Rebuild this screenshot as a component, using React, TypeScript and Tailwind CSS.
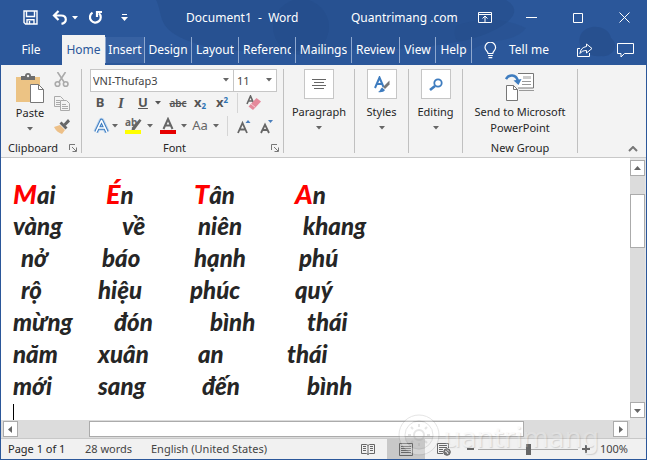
import React, { useState } from 'react';
import clsx from 'clsx';

const tabs = [
  { name: 'Home', width: 'w-[43px]' },
  { name: 'Insert', width: 'w-[40px]' },
  { name: 'Design', width: 'w-[47px]' },
  { name: 'Layout', width: 'w-[47px]' },
  { name: 'References', width: 'w-[57px]' },
  { name: 'Mailings', width: 'w-[56px]' },
  { name: 'Review', width: 'w-[48px]' },
  { name: 'View', width: 'w-[36px]' },
  { name: 'Help', width: 'w-[36px]' },
];

// each word: [text, indent]
const poem: [string, string][][] = [
  [['Mai', 'pl-0'], ['Én', 'pl-2'], ['Tân', 'pl-1'], ['An', 'pl-2']],
  [['vàng', 'pl-0'], ['về', 'pl-6'], ['niên', 'pl-2'], ['khang', 'pl-4']],
  [['nở', 'pl-2'], ['báo', 'pl-1'], ['hạnh', 'pl-1'], ['phú', 'pl-3']],
  [['rộ', 'pl-2'], ['hiệu', 'pl-0'], ['phúc', 'pl-0'], ['quý', 'pl-2']],
  [['mừng', 'pl-0'], ['đón', 'pl-4'], ['bình', 'pl-5'], ['thái', 'pl-5']],
  [['năm', 'pl-0'], ['xuân', 'pl-0'], ['an', 'pl-2'], ['thái', 'pl-0']],
  [['mới', 'pl-0'], ['sang', 'pl-0'], ['đến', 'pl-3'], ['bình', 'pl-5']],
];

const Caret: React.FC<{ className?: string }> = ({ className }) => (
  <svg width="6" height="4" viewBox="0 0 6 4" className={clsx('shrink-0', className)} aria-hidden="true">
    <path d="M0 0h6L3 3.5z" fill="currentColor" />
  </svg>
);

const Launcher: React.FC<{ label: string }> = ({ label }) => (
  <button aria-label={label} className="text-[#777]">
    <svg width="8" height="8" viewBox="0 0 8 8" fill="none" stroke="currentColor">
      <path d="M.5 6V.5H6M3 3l4 4M7.5 3.5v4h-4" />
    </svg>
  </button>
);

const TitleBar: React.FC = () => (
  <header className="flex h-[35px] items-center pl-[22px] pr-4">
    <div className="flex items-center">
      <button aria-label="Save">
        <svg width="15" height="15" viewBox="0 0 15 15" fill="none" stroke="white" strokeWidth="1.4">
          <path d="M1 1h13v13H2.5L1 12.5zM3.5 1v5.5h8V1M4 14V9.8h7V14M6.5 11v3" />
        </svg>
      </button>
      <button aria-label="Undo" className="ml-[14px]">
        <svg width="16" height="16" viewBox="0 0 16 16" fill="none" stroke="white" strokeWidth="2.2">
          <path d="M6.5 1L2 5.5l4.5 4.5M2.5 5.5H9c3 0 4.8 1.6 4.8 4 0 2-1.4 3.7-4.3 4.3" />
        </svg>
      </button>
      <Caret className="ml-1 text-white" />
      <button aria-label="Redo" className="ml-[10px]">
        <svg width="15" height="15" viewBox="0 0 15 15" fill="none" stroke="white" strokeWidth="2.2">
          <path d="M4.5 2.6A5.4 5.4 0 1 0 11 3.2M9 7V2h5" />
        </svg>
      </button>
      <button aria-label="Customize Quick Access Toolbar" className="ml-[18px]">
        <svg width="7" height="8" viewBox="0 0 7 8" fill="white">
          <path d="M1 0h5v1H1zM0 3h7L3.5 7z" />
        </svg>
      </button>
    </div>
    <h1 className="ml-[58px] w-[165px] whitespace-pre">Document1  -  Word</h1>
    <span className="flex-1 whitespace-nowrap">Quantrimang .com</span>
    <button aria-label="Ribbon Display Options">
      <svg width="14" height="12" viewBox="0 0 14 12" fill="none" stroke="white">
        <path d="M.5.5h13v10H.5zM.5 2.5h13M7 10V4.5M4.5 6.5L7 4l2.5 2.5" />
      </svg>
    </button>
    <button aria-label="Minimize" className="ml-[34px]">
      <svg width="11" height="11" viewBox="0 0 11 11" stroke="white"><path d="M0 5.5h11" /></svg>
    </button>
    <button aria-label="Maximize" className="ml-9">
      <svg width="10" height="10" viewBox="0 0 10 10" fill="none" stroke="white"><path d="M.5.5h9v9h-9z" /></svg>
    </button>
    <button aria-label="Close" className="ml-9">
      <svg width="11" height="11" viewBox="0 0 11 11" stroke="white"><path d="M.5.5l10 10M10.5.5l-10 10" /></svg>
    </button>
  </header>
);

const TabBar: React.FC = () => (
  <nav className="flex h-[30px]">
    <button className="w-[61px] pb-px pr-px">File</button>
    {tabs.map((tab) => (
      <button
        key={tab.name}
        className={clsx(
          'flex shrink-0 items-center pb-px',
          tab.width,
          tab.name === 'Home' ? 'bg-[#f3f3f3] text-[#2b579a]' : 'my-[2px] border-r border-[#8fa8cf]',
          tab.name === 'Insert' && 'border-l bg-[#3761a2]',
          tab.name === 'References' ? 'px-1' : 'justify-center',
        )}
      >
        <span className="overflow-hidden whitespace-nowrap">{tab.name}</span>
      </button>
    ))}
    <div className="flex flex-1 items-center pl-3 pr-3">
      <svg width="13" height="17" viewBox="0 0 13 17" fill="none" stroke="white" strokeWidth="1.2" aria-hidden="true">
        <path d="M4 11.5C4 9 1 8.5 1 5.5a5.3 5.3 0 0 1 10.6 0C11.6 8.5 8.8 9 8.800 11.5zM4 13.5h4.8M4.500 15.7h3.8" />
      </svg>
      <button className="ml-3 flex-1 whitespace-nowrap text-left">Tell me</button>
      <button aria-label="Share">
        <svg width="16" height="14" viewBox="0 0 16 14" fill="none" stroke="white">
          <path d="M3 5.5H.5v8h12V10M9.5 1l5.500 4.5L9.5 10V7.5C6 7.500 4.5 8.5 3 10.5c.3-4 2.5-6.3 6.5-7z" />
        </svg>
      </button>
      <button aria-label="Comments" className="ml-6">
        <svg width="17" height="15" viewBox="0 0 17 15" fill="none" stroke="white">
          <path d="M.5.5h16v10H7.5L4 14v-3.500H.5z" />
        </svg>
      </button>
    </div>
  </nav>
);

const ClipboardGroup: React.FC = () => (
  <section aria-label="Clipboard" className="flex w-[81px] flex-col border-r border-[#c0c0c0] pl-[6px] pr-1">
    <div className="flex flex-1">
      <button className="flex w-[46px] flex-col items-center pt-1">
        <svg width="30" height="31" viewBox="0 0 30 31" aria-hidden="true">
          <path d="M1 4h24v25H1z" fill="#ecc384" />
          <path d="M6 7V3h4a3 3 0 0 1 6 0h4v4z" fill="#6d6d6d" />
          <circle cx="13" cy="3" r="1.2" fill="#f3f3f3" />
          <path d="M15.5 11.5h8l5 5v13h-13z" fill="white" stroke="#777" />
          <path d="M23.5 11.5v5h5" fill="none" stroke="#777" />
        </svg>
        <span className="mt-px leading-4">Paste</span>
        <Caret className="mt-[6px] text-[#666]" />
      </button>
      <div className="flex flex-col items-center justify-between pb-[9px] pl-px pt-[3px]">
        <button aria-label="Cut">
          <svg width="16" height="16" viewBox="0 0 16 16" fill="none" stroke="#aaa" strokeWidth="1.6">
            <path d="M3.5 0l6.5 10M11.5 0L5 10" />
            <circle cx="3.500" cy="12" r="2.3" />
            <circle cx="11.7" cy="12" r="2.3" />
          </svg>
        </button>
        <button aria-label="Copy">
          <svg width="16" height="15" viewBox="0 0 16 15" fill="#f3f3f3" stroke="#aaa">
            <path d="M.5.5h6l3 3v7h-9zM2 4.5h4M2 6.5h4M2 8.5h4" />
            <path d="M6.5 4.5h6l3 3v7h-9zM8 8.5h4M8 10.5h6M8 12.5h6" />
          </svg>
        </button>
        <button aria-label="Format Painter">
          <svg width="16" height="15" viewBox="0 0 16 15">
            <path d="M0 8l6-2 5 5-3 4c-3-1-6-3-8-7z" fill="#edc088" />
            <path d="M5.5 4.5l2-2 6 6-2 2z" fill="#666" />
            <path d="M9.500 5L14 0l2 2.5-4.500 4.5z" fill="#666" />
          </svg>
        </button>
      </div>
    </div>
    <div className="flex h-[10px] items-center justify-between leading-[10px]">
      <span className="pl-px">Clipboard</span>
      <Launcher label="Clipboard settings" />
    </div>
  </section>
);

const FontGroup: React.FC = () => {
  const [font, setFont] = useState('VNI-Thufap3');
  const [size, setSize] = useState('11');

  return (
    <section aria-label="Font" className="flex w-[202px] flex-col border-r border-[#c0c0c0] pl-2 pr-1">
      <div className="flex h-[23px]">
        <label className="relative flex w-[144px] border border-[#c6c6c6] bg-white">
          <span className="sr-only">Font name</span>
          <select value={font} onChange={(e) => setFont(e.target.value)} className="h-full w-full appearance-none px-[2px] leading-5 text-[#444] outline-none">
            <option>VNI-Thufap3</option>
            <option>Calibri</option>
            <option>Times New Roman</option>
          </select>
          <Caret className="pointer-events-none absolute right-1 top-2 text-[#666]" />
        </label>
        <label className="relative flex w-[43px] border border-l-0 border-[#c6c6c6] bg-white">
          <span className="sr-only">Font size</span>
          <select value={size} onChange={(e) => setSize(e.target.value)} className="h-full w-full appearance-none px-[3px] leading-5 text-[#444] outline-none">
            <option>11</option>
            <option>12</option>
            <option>14</option>
          </select>
          <Caret className="pointer-events-none absolute right-1 top-2 text-[#666]" />
        </label>
      </div>
      <div className="flex h-[22px] items-center text-[#555]">
        <button aria-label="Bold" className="w-[20px] text-[13px] font-bold">B</button>
        <button aria-label="Italic" className="w-[22px] font-['Liberation_Serif',serif] text-[15px] font-bold italic">I</button>
        <button aria-label="Underline" className="w-[22px] text-[13px] font-bold underline">U</button>
        <Caret className="ml-px" />
        <button aria-label="Strikethrough" className="ml-[6px] w-[22px] text-[10px] font-semibold line-through">abc</button>
        <button aria-label="Subscript" className="w-[22px] text-[13px] font-bold">
          x<sub className="text-[8px] text-[#2e75b6]">2</sub>
        </button>
        <button aria-label="Superscript" className="w-[22px] text-[13px] font-bold">
          x<sup className="text-[8px] text-[#2e75b6]">2</sup>
        </button>
        <span className="ml-1 h-5 border-l border-[#d5d5d5]" />
        <button aria-label="Clear All Formatting" className="ml-2">
          <svg width="16" height="16" viewBox="0 0 16 16">
            <path d="M1 9l3.5-8L8 9M2.3 6h4" fill="none" stroke="#666" strokeWidth="1.6" />
            <path d="M2.500 11.500L10.5 3l4.500 3.500-8 8.500z" fill="#e58a9b" />
            <path d="M5 9l4.500 3.500" stroke="#f5cbd2" />
          </svg>
        </button>
      </div>
      <div className="flex h-6 items-center text-[#666]">
        <button aria-label="Text Effects" className="w-[22px]">
          <svg width="17" height="18" viewBox="0 0 17 18" fill="none" strokeLinejoin="round" className="mx-auto">
            <path d="M3 15L8.5 3.500 14 15M5.5 11h6" stroke="#bcd5ef" strokeWidth="5.5" />
            <path d="M3 15L8.5 3.500 14 15M5.5 11h6" stroke="#3e7cbf" strokeWidth="3.600" />
            <path d="M3 15L8.5 3.500 14 15M5.5 11h6" stroke="white" strokeWidth="1.6" />
          </svg>
        </button>
        <Caret />
        <button aria-label="Text Highlight Color" className="ml-[7px]">
          <svg width="18" height="18" viewBox="0 0 18 18">
            <text x="0" y="9" fontSize="10" fontWeight="700" fill="#666" fontFamily="Noto Sans, sans-serif">ab</text>
            <path d="M14.500 2l2 1.500-7 9.500-3 .5.500-3z" fill="#666" />
            <path d="M0 13h16v4H0z" fill="#ff0" />
          </svg>
        </button>
        <Caret className="ml-1" />
        <button aria-label="Font Color" className="ml-[6px]">
          <svg width="18" height="18" viewBox="0 0 18 18">
            <path d="M4.500 12L9 2l4.500 10M6 8.5h6" fill="none" stroke="#666" strokeWidth="2" />
            <path d="M1 13h16v4H1z" fill="#e60000" />
          </svg>
        </button>
        <Caret className="ml-1" />
        <button aria-label="Change Case" className="ml-1 w-[18px] text-[13px]">Aa</button>
        <Caret className="ml-1" />
        <span className="ml-2 h-5 border-l border-[#d5d5d5]" />
        <button aria-label="Increase Font Size" className="ml-[9px]">
          <svg width="14" height="15" viewBox="0 0 14 15">
            <path d="M1 14L5.5 4 10 14M2.500 10.5h6" fill="none" stroke="#666" strokeWidth="1.8" />
            <path d="M8.500 4L11 1l2.500 3z" fill="#4a7ebb" />
          </svg>
        </button>
        <button aria-label="Decrease Font Size" className="ml-[9px]">
          <svg width="14" height="15" viewBox="0 0 14 15">
            <path d="M1 14l4-8.500L9 14M2.500 11h5" fill="none" stroke="#666" strokeWidth="1.8" />
            <path d="M8 1h5l-2.500 3z" fill="#4a7ebb" />
          </svg>
        </button>
      </div>
      <div className="mt-auto flex h-[10px] items-center leading-[10px]">
        <span className="flex-1 pr-3 text-center">Font</span>
        <Launcher label="Font settings" />
      </div>
    </section>
  );
};

interface CollapsedGroupProps {
  label: string;
  width: string;
  children: React.ReactNode;
}

const CollapsedGroup: React.FC<CollapsedGroupProps> = ({ label, width, children }) => (
  <button className={clsx('flex flex-col items-center border-r border-[#c0c0c0]', width)}>
    <span className="flex h-[30px] w-[30px] items-center justify-center border border-[#c6c6c6] bg-white">{children}</span>
    <span className="mt-[5px] leading-4">{label}</span>
    <Caret className="mt-[6px] text-[#666]" />
  </button>
);

const Ribbon: React.FC = () => (
  <div className="flex h-[93px] shrink-0 border-b border-[#c8c8c8] bg-[#f3f3f3] pb-1 pt-1 text-[#262626]">
    <ClipboardGroup />
    <FontGroup />
    <CollapsedGroup label="Paragraph" width="w-[71px]">
      <svg width="14" height="11" viewBox="0 0 14 11" stroke="#666" aria-hidden="true">
        <path d="M0 .5h14M2 3.5h10M0 6.5h14M2 9.5h10" />
      </svg>
    </CollapsedGroup>
    <CollapsedGroup label="Styles" width="w-[54px]">
      <svg width="16" height="17" viewBox="0 0 16 17" aria-hidden="true">
        <path d="M1 12L5.5 1.5l4 9.500M3 8h5" fill="none" stroke="#3e7cbf" strokeWidth="2" />
        <path d="M15.5 4.5v4L11 13l-2-2z" fill="#777" />
        <path d="M8 11.5l3 2.5c-1 2-4 2.5-7 2 2-.5 2-3 4-4.500z" fill="#3e7cbf" />
      </svg>
    </CollapsedGroup>
    <CollapsedGroup label="Editing" width="w-[54px]">
      <svg width="14" height="13" viewBox="0 0 14 13" fill="none" stroke="#3e7cbf" aria-hidden="true">
        <circle cx="9" cy="5" r="3.7" strokeWidth="1.8" />
        <path d="M6 8l-5 4" strokeWidth="2.6" />
      </svg>
    </CollapsedGroup>
    <section aria-label="New Group" className="flex w-[115px] flex-col items-center border-r border-[#c0c0c0]">
      <button className="flex flex-1 flex-col items-center pt-[3px]">
        <svg width="30" height="30" viewBox="0 0 30 30" aria-hidden="true">
          <path d="M13 1.5h15.5V16H13" fill="white" stroke="#777" />
          <path d="M18 4h8v3h-8z" fill="#ccc" />
          <path d="M17 9.5h9M17 12.5h9M14 18.5h15" stroke="#999" />
          <path d="M1.5 13.5h7l4 4v11h-11z" fill="white" stroke="#777" />
          <path d="M8.5 13.5v4h4" fill="none" stroke="#777" />
          <path d="M1 7C4 2 11 2 13 9" fill="none" stroke="#3e7cbf" strokeWidth="2.500" />
          <path d="M8.500 8.500l5 4.500 3-6z" fill="#3e7cbf" />
        </svg>
        <span className="mt-[2px] leading-4">Send to Microsoft<br />PowerPoint</span>
      </button>
      <span className="h-[10px] leading-[10px]">New Group</span>
    </section>
    <div className="flex flex-1 items-end justify-end pb-px pr-2">
      <button aria-label="Collapse the Ribbon">
        <svg width="10" height="6" viewBox="0 0 10 6" fill="none" stroke="#777" strokeWidth="2" className="block"><path d="M1 5l4-4 4 4" /></svg>
      </button>
    </div>
  </div>
);

const ScrollButton: React.FC<{ label: string; d: string }> = ({ label, d }) => (
  <button aria-label={label} className="flex h-4 w-[15px] shrink-0 items-center justify-center border border-[#ababab] bg-white">
    <svg width="7" height="7" viewBox="0 0 7 7" fill="#666"><path d={d} /></svg>
  </button>
);

const DocumentArea: React.FC = () => (
  <div className="flex min-h-0 flex-1">
    <div className="flex min-w-0 flex-1 flex-col">
      <main className="min-h-0 flex-1 overflow-hidden pl-3 pt-5 font-['Lato',sans-serif] text-[24px] font-black italic leading-8 text-[#262626]">
        {poem.map((line, row) => (
          <p key={row} className="grid h-8 grid-cols-[85px_92px_97px_auto]">
            {line.map(([word, indent], i) => (
              <span key={i} className={clsx('whitespace-nowrap', indent)}>
                {row === 0 ? <><span className="text-[27px] text-[#f00]">{word[0]}</span>{word.slice(1)}</> : word}
              </span>
            ))}
          </p>
        ))}
        <div className="mt-[2px] h-4 w-px bg-black" />
      </main>
      <div className="flex h-[18px] shrink-0 items-center bg-[#dcdcdc] pl-[2px] pr-[2px]">
        <ScrollButton label="Scroll left" d="M5 0v7L1 3.5z" />
        <div className="flex flex-1">
          <div className="ml-[12%] h-4 w-[73%] border border-[#ababab] bg-white" />
        </div>
        <ScrollButton label="Scroll right" d="M2 0v7l4-3.5z" />
      </div>
    </div>
    <div className="flex w-4 shrink-0 flex-col items-start bg-[#e6e6e6] pb-5 pt-[2px]">
      <ScrollButton label="Scroll up" d="M0 5h7L3.5 1z" />
      <div className="w-[15px] flex-1 bg-[#dcdcdc] pt-[18px]">
        <div className="h-[54px] border border-[#ababab] bg-white" />
      </div>
      <ScrollButton label="Scroll down" d="M0 2h7L3.5 6z" />
    </div>
  </div>
);

const StatusBar: React.FC = () => {
  const [zoom, setZoom] = useState(100);

  return (
    <footer className="flex h-[21px] shrink-0 items-stretch border-t border-[#c8c8c8] bg-[#f1f1f1] pl-[7px] pr-[18px] text-[#444]">
      <div className="flex flex-1 items-center whitespace-nowrap">
        <span className="w-[77px] text-[#262626]">Page 1 of 1</span>
        <span className="w-[66px]">28 words</span>
        <span>English (United States)</span>
      </div>
      <button aria-label="Read Mode" className="flex w-[38px] items-center justify-center">
        <svg width="14" height="12" viewBox="0 0 14 12" fill="none" stroke="#666">
          <path d="M.5 1.5h5l1.500 1 1.500-1h5v9h-5l-1.500 1-1.500-1h-5zM7 2.5v9M2 3.5h3M2 5.5h3M2 7.5h3M9 3.5h3M9 5.5h3M9 7.5h3" />
        </svg>
      </button>
      <button aria-label="Print Layout" className="flex w-[38px] items-center justify-center bg-[#c8c8c8]">
        <svg width="14" height="13" viewBox="0 0 14 13" fill="none" stroke="#666">
          <path d="M.5.5h13v12H.5zM2 3.5h10M2 5.5h10M2 7.5h10M2 9.5h10" />
        </svg>
      </button>
      <button aria-label="Web Layout" className="flex w-[38px] items-center justify-center">
        <svg width="14" height="13" viewBox="0 0 14 13" fill="none" stroke="#666">
          <path d="M6 10.5H.5V.5h11V5M2 2.5h8M2 4.5h8M2 6.5h4M2 8.5h4" />
          <circle cx="10" cy="9" r="3.3" fill="#777" />
          <path d="M8 8l2 1 1 2M10 6.5l2 2" stroke="#eee" />
        </svg>
      </button>
      <button aria-label="Zoom Out" className="ml-1 flex items-center">
        <svg width="7" height="8" viewBox="0 0 7 8" fill="#666"><path d="M0 3h7v2H0z" /></svg>
      </button>
      <input
        type="range"
        aria-label="Zoom"
        min={0}
        max={200}
        value={zoom}
        onChange={(e) => setZoom(Number(e.target.value))}
        className="mx-1 w-[100px] appearance-none bg-transparent [&::-webkit-slider-runnable-track]:h-px [&::-webkit-slider-runnable-track]:bg-[#aaa] [&::-webkit-slider-thumb]:-mt-[5px] [&::-webkit-slider-thumb]:h-[11px] [&::-webkit-slider-thumb]:w-[5px] [&::-webkit-slider-thumb]:appearance-none [&::-webkit-slider-thumb]:bg-[#666]"
      />
      <button aria-label="Zoom In" className="flex items-center">
        <svg width="8" height="8" viewBox="0 0 8 8" fill="#666"><path d="M0 3h3V0h2v3h3v2H5v3H3V5H0z" /></svg>
      </button>
      <span className="flex w-[38px] items-center justify-end">{zoom}%</span>
    </footer>
  );
};

const Watermark: React.FC = () => (
  <div className="pointer-events-none absolute bottom-0 right-[47px] flex items-center text-[#999] opacity-25" aria-hidden="true">
    <svg width="48" height="46" viewBox="0 0 48 46" fill="none" stroke="currentColor">
      <circle cx="24" cy="22" r="17" stroke="white" strokeWidth="5" />
      <circle cx="24" cy="22" r="20" />
      <circle cx="24" cy="22" r="14" />
      <circle cx="24" cy="22" r="5" strokeWidth="2" />
      <path d="M24 11v3M24 30v3M13 22h3M32 22h3M16 14l2 2M30 28l2 2M32 14l-2 2M18 28l-2 2" strokeWidth="2" />
    </svg>
    <span className="text-[28px] leading-10 text-[#eee] [text-shadow:1px_1px_1px_#777]">uantrimang</span>
  </div>
);

export default function App() {
  return (
    <div className="relative flex h-screen flex-col overflow-hidden border-x border-b border-[#2b579a] bg-white font-['Noto_Sans','Open_Sans',sans-serif] text-[11px]">
      <div className="relative shrink-0 bg-[#2b579a] text-[12px] text-white">
        <svg className="absolute inset-0 h-full w-full" viewBox="0 0 645 65" preserveAspectRatio="none" fill="#244b88" aria-hidden="true">
          <path d="M155 0h350c20 12 0 26-20 34-30 12-90 18-160 15-60 6-120 4-150-14-18-10-14-24-20-35z" opacity=".5" />
          <circle cx="300" cy="27" r="28" opacity=".4" />
          <path d="M455 26c20-8 45-10 70 2-12 16-38 10-54 22-16-6-20-14-16-24z" opacity=".3" />
          <path d="M580 34c8-12 28-8 30 4 10 8 0 20-10 18-14 2-26-10-20-22z" opacity=".6" />
        </svg>
        <div className="relative">
          <TitleBar />
          <TabBar />
        </div>
      </div>
      <Ribbon />
      <DocumentArea />
      <StatusBar />
      <Watermark />
    </div>
  );
}
